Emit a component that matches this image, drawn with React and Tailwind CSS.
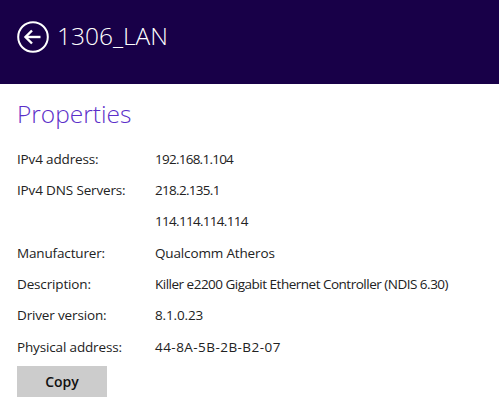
import React from "react";

// tracking per value, tuned to the original's digit / letter widths
const rows = [
  ["IPv4 address:", "192.168.1.104", "tracking-[-0.75px]"],
  ["IPv4 DNS Servers:", "218.2.135.1", "tracking-[-0.7px]"],
  ["", "114.114.114.114", "tracking-[-0.7px]"],
  ["Manufacturer:", "Qualcomm Atheros", "tracking-[-0.15px]"],
  ["Description:", "Killer e2200 Gigabit Ethernet Controller (NDIS 6.30)", "tracking-[-0.5px]"],
  ["Driver version:", "8.1.0.23", "tracking-[-0.15px]"],
  ["Physical address:", "44-8A-5B-2B-B2-07", "tracking-[0.45px]"],
];

function BackIcon() {
  return (
    <svg width="32" height="32" viewBox="0 0 32 32" fill="none">
      <circle cx="16" cy="16" r="14.8" stroke="white" strokeWidth="2" />
      <path d="M8.5 16h15" stroke="white" strokeWidth="2.4" />
      <path d="M15 9.5 8.5 16l6.5 6.5" stroke="white" strokeWidth="2.4" />
    </svg>
  );
}

export default function App() {
  return (
    <div className="w-[499px] h-[419px] bg-white overflow-hidden" style={{ fontFamily: '"Open Sans", "Noto Sans", sans-serif' }}>
      <div className="h-[84px] bg-[#180048] flex items-center pl-[17px] gap-[8px] pb-[11px]">
        <BackIcon />
        <span className="text-white text-[24.5px] font-light leading-none">1306_LAN</span>
      </div>
      <div className="pl-[17px]">
        <h1 className="text-[#5b2fc9] text-[24.5px] font-light mt-[12px] h-[42px] leading-[36px]">Properties</h1>
        <div className="mt-[5px]">
          {rows.map(([k, v, t], i) => (
            <div key={i} className="flex h-[31.33px] items-center text-[13.5px] text-[#222]">
              <span className="w-[138px] shrink-0 tracking-[-0.15px]">{k}</span>
              <span className={t}>{v}</span>
            </div>
          ))}
        </div>
        <button className="mt-[4px] w-[90px] h-[31px] bg-[#cccccc] text-[14px] font-semibold text-[#111]">Copy</button>
      </div>
    </div>
  );
}
